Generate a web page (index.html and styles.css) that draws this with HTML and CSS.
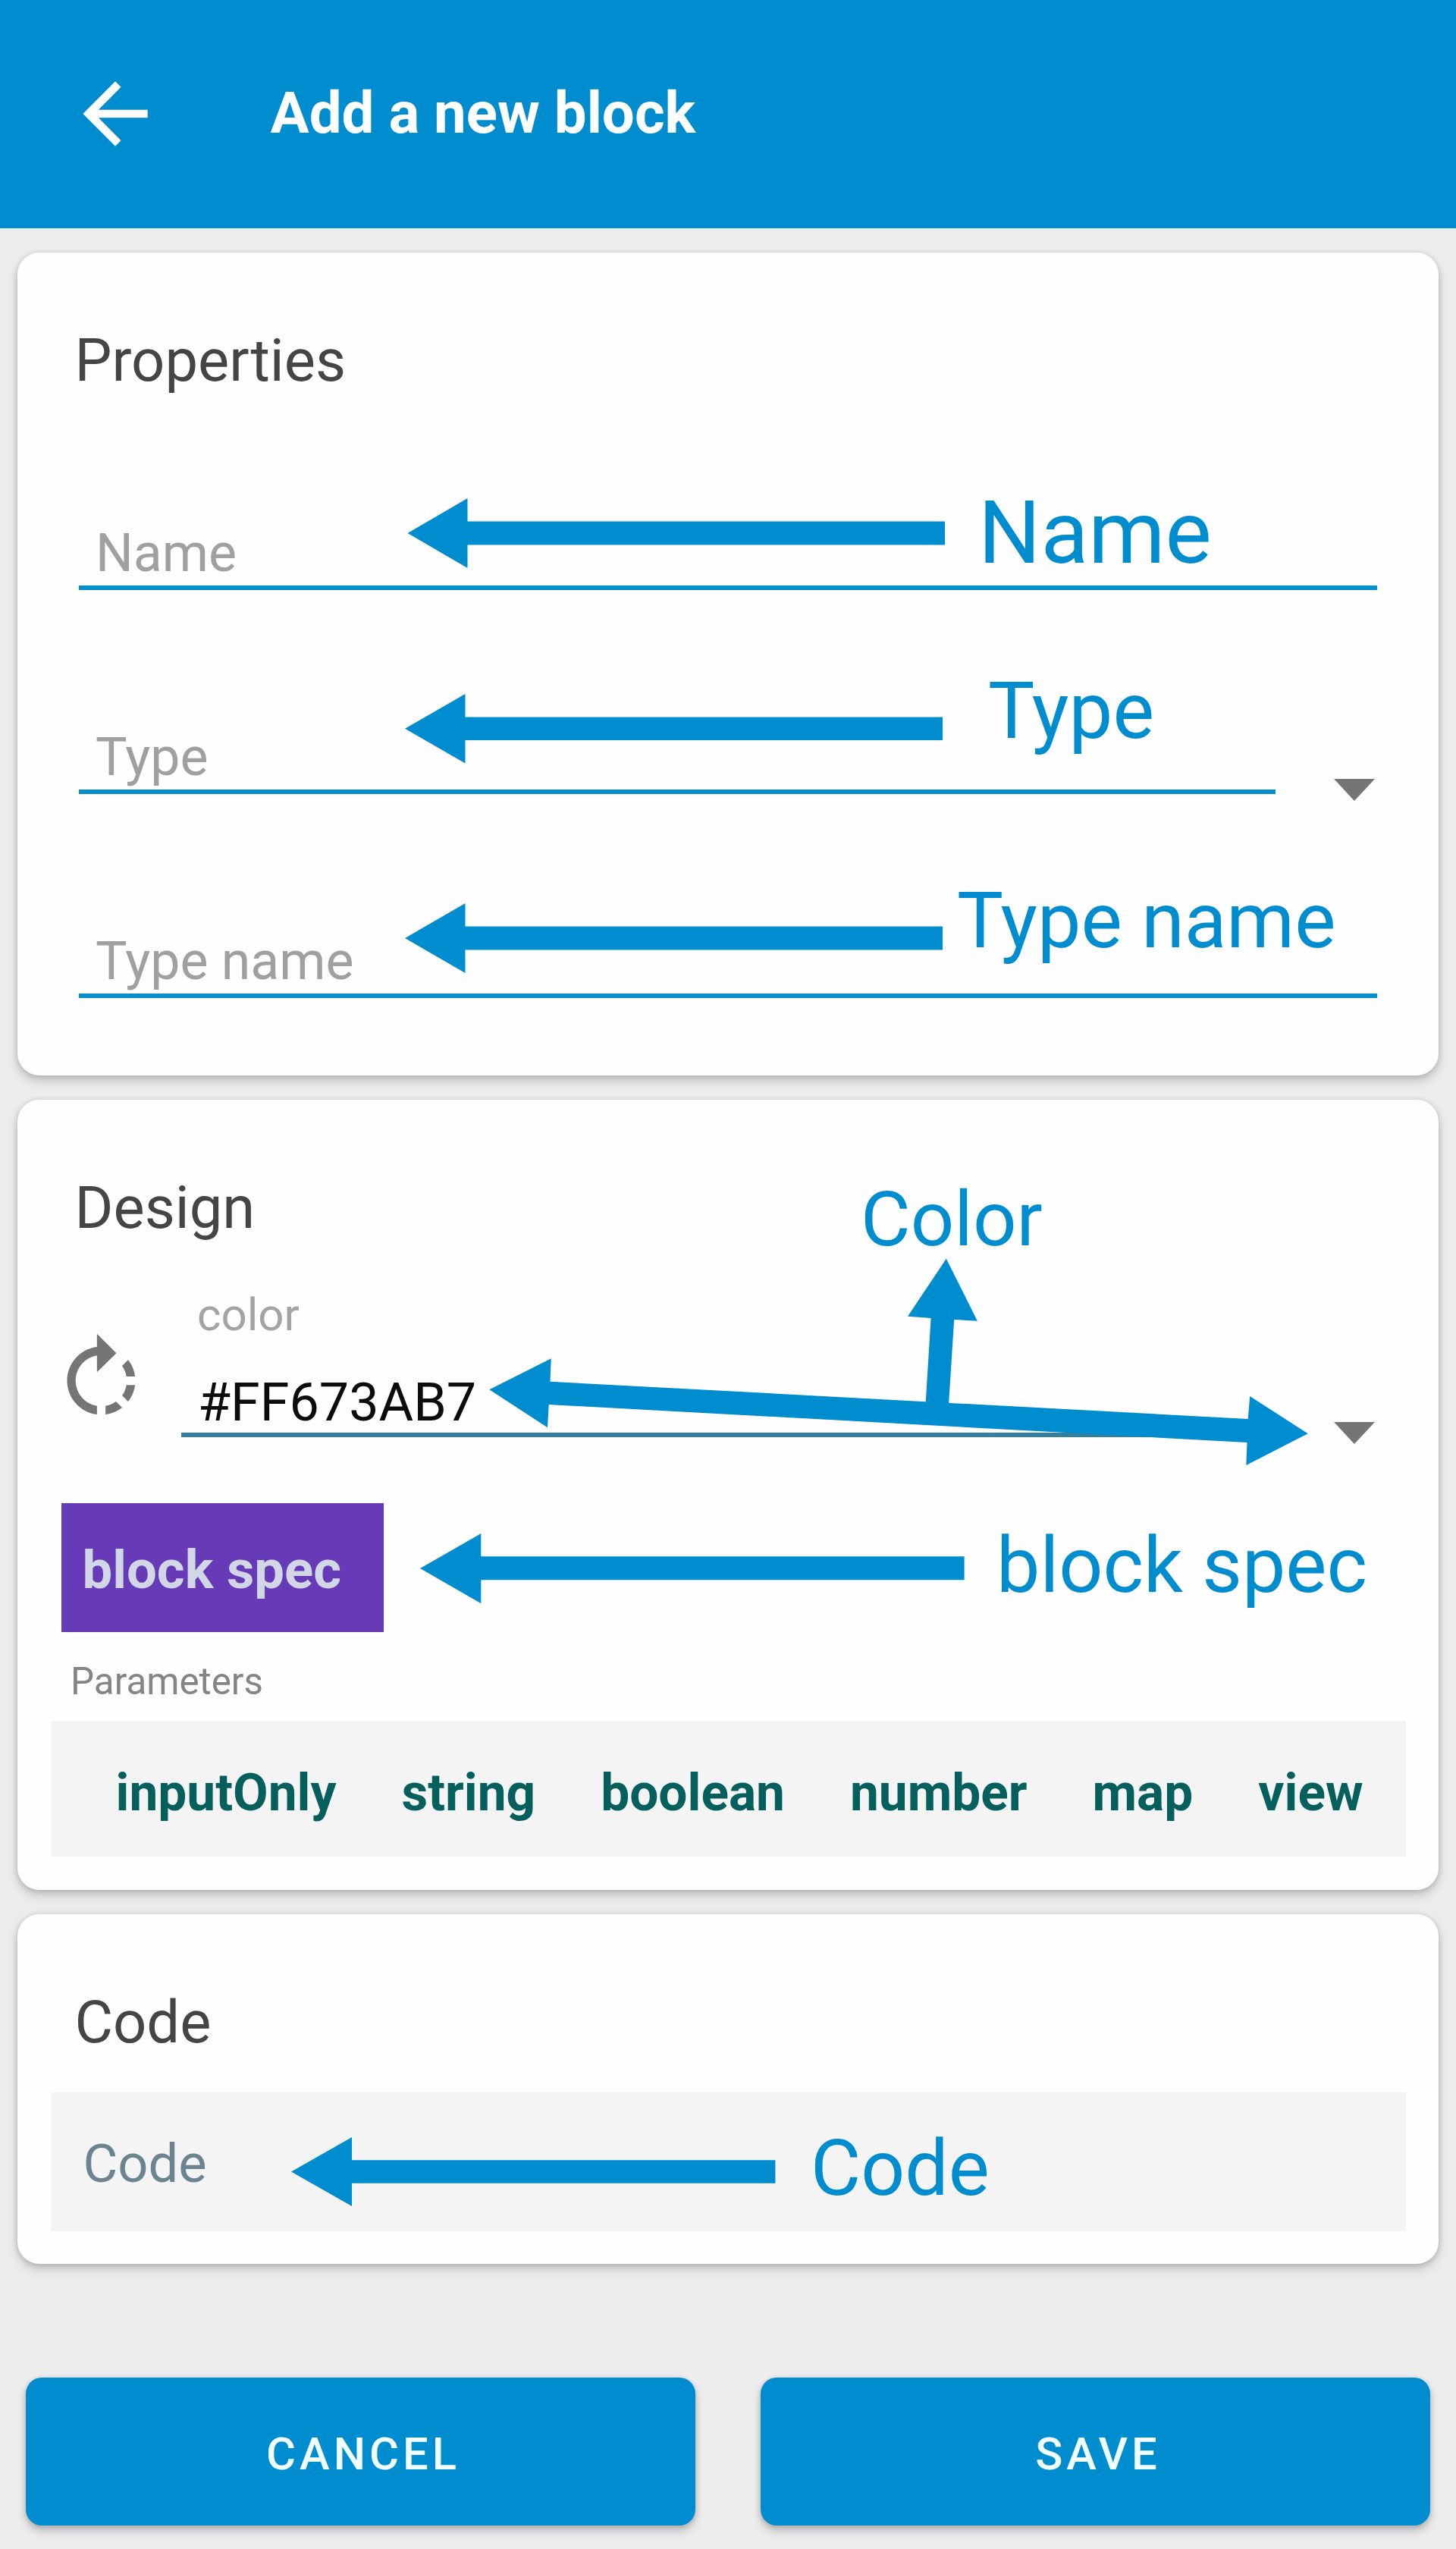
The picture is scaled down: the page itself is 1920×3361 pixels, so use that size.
FILE: index.html
```html
<!DOCTYPE html>
<html lang="en">
<head>
<meta charset="utf-8">
<title>Add a new block</title>
<link rel="stylesheet" href="styles.css">
</head>
<body>
<div class="screen">
  <header class="app-bar">
    <svg class="back" viewBox="0 0 24 24" aria-hidden="true"><path d="M20 11H7.83l5.59-5.59L12 4l-8 8 8 8 1.41-1.41L7.83 13H20v-2z"/></svg>
    <h1 class="title">Add a new block</h1>
  </header>

  <main class="content">
    <section class="card properties">
      <h2 class="heading">Properties</h2>
      <div class="fields">
        <div class="row"><div class="field hint">Name</div></div>
        <div class="row">
          <div class="field hint">Type</div>
          <svg class="caret" viewBox="0 0 10 5" preserveAspectRatio="none" aria-hidden="true"><path d="M0 0h10L5 5z"/></svg>
        </div>
        <div class="row"><div class="field hint">Type name</div></div>
      </div>
    </section>

    <section class="card design">
      <h2 class="heading">Design</h2>
      <div class="color-row">
        <svg class="rotate" viewBox="0 0 24 24" aria-hidden="true"><path d="M15.55 5.55L11 1v3.07C7.06 4.56 4 7.92 4 12s3.05 7.44 7 7.93v-2.02c-2.84-.48-5-2.94-5-5.91s2.16-5.43 5-5.91V10l4.55-4.45zM19.93 11c-.17-1.39-.72-2.73-1.62-3.89l-1.42 1.42c.54.75.88 1.6 1.02 2.47h2.02zM13 17.9v2.02c1.39-.17 2.74-.71 3.9-1.61l-1.44-1.44c-.75.54-1.59.89-2.46 1.03zm3.89-2.42l1.42 1.41c.9-1.16 1.45-2.5 1.62-3.89h-2.02c-.14.87-.48 1.72-1.02 2.48z"/></svg>
        <div class="color-field">
          <div class="color-label">color</div>
          <div class="color-value">#FF673AB7</div>
        </div>
        <svg class="caret" viewBox="0 0 10 5" preserveAspectRatio="none" aria-hidden="true"><path d="M0 0h10L5 5z"/></svg>
      </div>
      <div class="block">block spec</div>
      <div class="caption">Parameters</div>
      <div class="params">
        <span>inputOnly</span><span>string</span><span>boolean</span><span>number</span><span>map</span><span>view</span>
      </div>
    </section>

    <section class="card code">
      <h2 class="heading">Code</h2>
      <div class="code-input">Code</div>
    </section>
  </main>

  <footer class="actions">
    <button class="btn">CANCEL</button>
    <button class="btn">SAVE</button>
  </footer>

  <svg class="notes" viewBox="0 0 1920 3361">
    <path d="M537.500 703l79-46v30.500H1246v31H616.500v30.500z"/>
    <path d="M534 960.700l79.500-45.700v30.500H1243v30.500H613.500v30.500z"/>
    <path d="M534 1237l79.500-46v30.500H1243v31H613.500v30.500z"/>
    <path d="M645.300 1832.300L726.700 1791.300L725.500 1821.700L1645.700 1871L1648.200 1841L1724.700 1890.300L1643.300 1932L1644.500 1902L723.700 1852L722 1882.300z"/>
    <path d="M1247.800 1659.700L1288.800 1741.700L1258.200 1740L1250.500 1860H1220L1227.600 1738L1197 1735.700z"/>
    <path d="M554 2068l80.300-46v30.300H1271.600v31H634.300v31z"/>
    <path d="M384 2863.500l80-45.500v30.300H1022.400v30.500H464v30.200z"/>
    <text x="1290" y="742" font-size="115.500">Name</text>
    <text x="1303" y="973" font-size="103">Type</text>
    <text x="1262" y="1249" font-size="102.400">Type name</text>
    <text x="1135" y="1642" font-size="101">Color</text>
    <text x="1314" y="2099" font-size="102.200">block spec</text>
    <text x="1069" y="2893.500" font-size="101.800">Code</text>
  </svg>
</div>
</body>
</html>
```
FILE: styles.css
```css
* { box-sizing: border-box; margin: 0; }

body {
  background: #ededed;
  font-family: Roboto, "Liberation Sans", sans-serif;
}

.screen {
  position: relative;
  width: 1920px;
  height: 3361px;
  overflow: hidden;
}

/* App bar */
.app-bar {
  display: flex;
  align-items: center;
  height: 300.500px;
  padding-left: 88px;
  background: #008dcf;
  color: #fff;
}

.back {
  width: 128px;
  height: 128px;
  fill: #fff;
}

.title {
  margin-left: 140.500px;
  padding-bottom: 2px;
  font-size: 76.200px;
  font-weight: 700;
  line-height: 90px;
}

/* Cards */
.content {
  display: flex;
  flex-direction: column;
  gap: 32px;
  padding: 32.500px 23px 0 23px;
}

.card {
  border-radius: 29px;
  background: #fefefe;
  box-shadow: 0 7px 14px rgba(0, 0, 0, 0.18), 0 1px 8px rgba(0, 0, 0, 0.14);
}

.properties { height: 1085px; padding-top: 103px; }
.design { height: 1042px; padding-top: 103px; }
.code { height: 461px; padding-top: 103px; }

.heading {
  padding-left: 75.500px;
  color: #454545;
  font-size: 77.700px;
  font-weight: 400;
  line-height: 80px;
}

/* Underlined inputs */
.fields {
  display: flex;
  flex-direction: column;
  gap: 177px;
  margin-top: 170px;
  padding: 0 81px;
}

.row { display: flex; height: 92px; }

.field {
  flex: 1;
  padding-left: 22px;
  border-bottom: 6px solid #068dcd;
  font-size: 69.800px;
  line-height: 86px;
}

.hint { color: #a0a0a0; }

.caret {
  flex: none;
  align-self: flex-end;
  width: 54px;
  height: 29px;
  margin: 0 3px -9px 77px;
  fill: #757575;
}

/* Colour picker row */
.color-row {
  display: flex;
  margin-top: 71px;
  padding: 0 81px 0 43px;
}

.rotate {
  flex: none;
  width: 135px;
  height: 135px;
  margin: 49px 38px 0 0;
  fill: #757575;
}

.color-field {
  flex: 1;
  border-bottom: 6px solid #327f9f;
}

.color-label {
  padding-left: 21px;
  color: #a3a3a3;
  font-size: 60px;
  line-height: 60px;
}

.color-value {
  margin-top: 46px;
  padding-left: 22px;
  color: #0c0c0c;
  font-size: 70px;
  line-height: 79px;
}

/* Block preview and parameters */
.block {
  width: 425px;
  height: 169.500px;
  margin: 87px 0 0 58px;
  padding: 6px 0 0 27.500px;
  background: #673ab7;
  color: #d1d7e6;
  font-size: 70.700px;
  font-weight: 700;
  line-height: 163px;
}

.caption {
  margin-top: 35.500px;
  padding-left: 70px;
  color: #858585;
  font-size: 49.300px;
  line-height: 60px;
}

.params {
  display: flex;
  gap: 86px;
  height: 179.500px;
  margin: 21.500px 43.500px 0;
  padding: 11px 0 0 86px;
  background: #f4f4f4;
  color: #055f5d;
  font-size: 67.600px;
  font-weight: 700;
  line-height: 169.500px;
}

.code-input {
  height: 183px;
  margin: 51.500px 43.500px 0;
  padding: 5px 0 0 43px;
  background: #f4f4f4;
  color: #6b8490;
  font-size: 70.400px;
  line-height: 178px;
}

/* Bottom actions */
.actions {
  display: flex;
  gap: 86px;
  margin-top: 150px;
  padding: 0 34px;
}

.btn {
  flex: 1;
  height: 194.500px;
  padding: 7px 0 0 7px;
  border: 0;
  border-radius: 21px;
  background: #008dcf;
  box-shadow: 0 7px 12px rgba(0, 0, 0, 0.22), 0 1px 6px rgba(0, 0, 0, 0.12);
  color: #f2ffff;
  font: 500 59.700px/74px Roboto, "Liberation Sans", sans-serif;
  letter-spacing: 5px;
}

/* Callout arrows and labels drawn over the form */
.notes {
  position: absolute;
  inset: 0;
  width: 1920px;
  height: 3361px;
  fill: #008dcf;
  pointer-events: none;
}
```
